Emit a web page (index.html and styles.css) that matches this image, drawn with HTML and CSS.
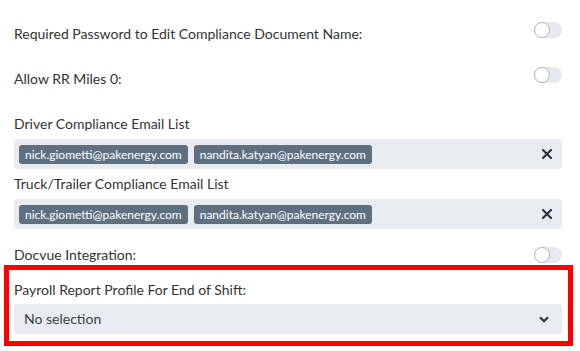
FILE: index.html
```html
<!DOCTYPE html>
<html lang="en">
  <head>
    <meta charset="utf-8">
    <title>Compliance Settings</title>
    <link rel="stylesheet" href="styles.css">
  </head>
  <body>
    <div class="settings">
      <div class="toggle-row">
        <span>Required Password to Edit Compliance Document Name:</span>
        <span class="switch"></span>
      </div>
      <div class="toggle-row">
        <span>Allow RR Miles 0:</span>
        <span class="switch"></span>
      </div>

      <div class="field field-first">
        <label>Driver Compliance Email List</label>
        <div class="tags">
          <span class="chip">nick.giometti@pakenergy.com</span>
          <span class="chip">nandita.katyan@pakenergy.com</span>
          <svg class="clear" width="10" height="10" viewBox="0 0 10 10">
            <path d="M1 1L9 9M9 1L1 9" stroke="#2f353b" stroke-width="2.2" stroke-linecap="square"/>
          </svg>
        </div>
      </div>
      <div class="field">
        <label>Truck/Trailer Compliance Email List</label>
        <div class="tags">
          <span class="chip">nick.giometti@pakenergy.com</span>
          <span class="chip">nandita.katyan@pakenergy.com</span>
          <svg class="clear" width="10" height="10" viewBox="0 0 10 10">
            <path d="M1 1L9 9M9 1L1 9" stroke="#2f353b" stroke-width="2.2" stroke-linecap="square"/>
          </svg>
        </div>
      </div>

      <div class="toggle-row docvue">
        <span>Docvue Integration:</span>
        <span class="switch"></span>
      </div>

      <!--highlighted field-->
      <div class="highlight">
        <label>Payroll Report Profile For End of Shift:</label>
        <div class="select">
          <span>No selection</span>
          <svg width="10" height="7" viewBox="0 0 10 7">
            <path d="M1 1.2L5 5.2L9 1.2" fill="none" stroke="#2f353b" stroke-width="2.2"/>
          </svg>
        </div>
      </div>
    </div>
  </body>
</html>
```

FILE: styles.css
```css
body{
  margin:0;
  background:#fff;
}
.settings{
  padding:24px 18px 0 14px;
  font-family:Lato, "Liberation Sans", sans-serif;
  font-size:14px;
  line-height:20px;
  color:#333;
}
/*toggle rows*/
.toggle-row{
  display:flex;
  justify-content:space-between;
  align-items:flex-start;
  margin-bottom:25px;
}
.switch{
  position:relative;
  width:28px;
  height:16px;
  margin-top:-2px;
  border-radius:8px;
  background:#e6e9ed;
}
.switch::before{
  content:"";
  position:absolute;
  left:0;
  top:0;
  width:16px;
  height:16px;
  box-sizing:border-box;
  border:1px solid #b4b7ba;
  border-radius:50%;
  background:#fff;
}
.toggle-row.docvue{
  margin:16px 0 0;
}
.toggle-row.docvue .switch{
  margin-top:2px;
}
/*email lists*/
.field{
  margin-top:5px;
}
.field-first{
  margin-top:0;
}
.field label,
.highlight label{
  display:block;
  margin-bottom:5px;
}
.tags{
  display:flex;
  align-items:center;
  gap:6px;
  height:30px;
  padding:0 10px 0 5px;
  border-radius:3px;
  background:#e8ecf0;
}
.chip{
  height:19px;
  padding:0 6px;
  border-radius:3px;
  background:#5e707f;
  color:#fff;
  font-size:12px;
  line-height:19px;
}
.clear{
  margin-left:auto;
}
/*payroll select*/
.highlight{
  margin:0 -11px 0 -10px;
  padding:10px 6px 7px 5px;
  border:5px solid #f00;
}
.highlight label{
  margin-bottom:4px;
}
.select{
  display:flex;
  justify-content:space-between;
  align-items:center;
  height:30px;
  padding:0 13px 0 10px;
  border-radius:3px;
  background:#e8ecf0;
  color:#3a3f44;
}
```
